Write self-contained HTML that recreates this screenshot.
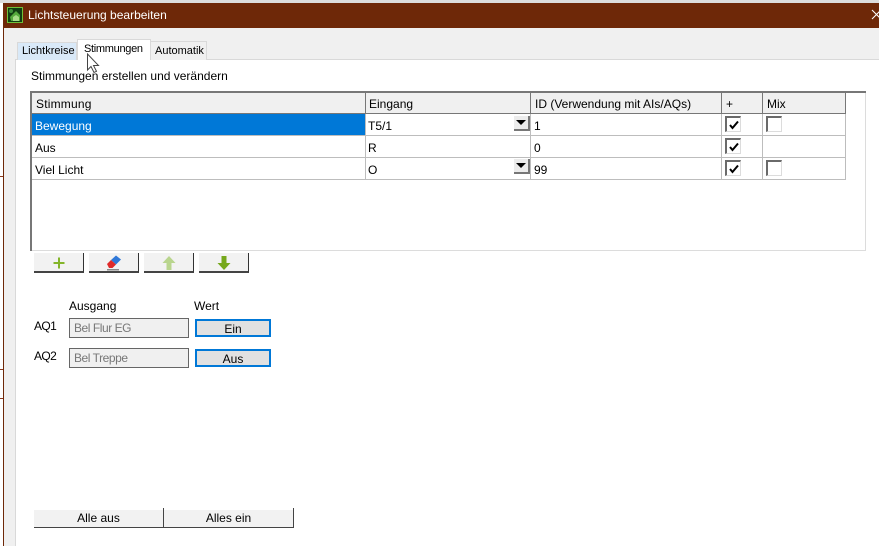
<!DOCTYPE html>
<html><head><meta charset="utf-8"><style>
html,body{margin:0;padding:0}
body{width:879px;height:546px;position:relative;overflow:hidden;background:#fff;font-family:"Liberation Sans",sans-serif;font-size:12px;color:#000}
.a,.t{position:absolute}
.t{white-space:nowrap;line-height:14px}
.h{background:#777}
.g{background:#bdbdbd}
.btn{position:absolute;box-sizing:border-box;background:#f2f2f2;border-right:1px solid #333;border-bottom:2px solid #444;height:20px;top:253px;width:50px}
.cb{position:absolute;box-sizing:border-box;width:16px;height:16px;background:#fff;border:1px solid #dcdcdc;border-top:2px solid #6a6a6a;border-left:2px solid #6a6a6a}
.dd{position:absolute;box-sizing:border-box;width:16px;height:15px;background:#ececec;border-right:2px solid #777;border-bottom:2px solid #777}
.dd:after{content:"";position:absolute;left:2px;top:4px;border-left:5px solid transparent;border-right:5px solid transparent;border-top:5px solid #000}
.ro{position:absolute;box-sizing:border-box;left:69px;width:120px;height:20px;background:#f0f0f0;border:1px solid #666;color:#777;padding-left:4px;line-height:18px;letter-spacing:-.45px}
.val{position:absolute;box-sizing:border-box;left:195px;width:76px;height:18px;background:#e1e1e1;border:2px solid #0078d7;text-align:center;line-height:16px}
</style></head><body>
<div class="a" style="left:0;top:0;width:879px;height:3px;background:#ddd"></div>
<div class="a" style="left:3px;top:3px;width:876px;height:25px;background:#6e2808"></div>
<div class="a" style="left:3px;top:28px;width:1px;height:518px;background:#6e2808"></div>
<div class="a" style="left:0;top:3px;width:3px;height:543px;background:#fff"></div>
<div class="a" style="left:4px;top:28px;width:875px;height:32px;background:#f0f0f0"></div>
<div class="a" style="left:4px;top:28px;width:12px;height:518px;background:#f0f0f0"></div>
<div class="a" style="left:15px;top:59px;width:864px;height:1px;background:#d9d9d9"></div>
<div class="a" style="left:15px;top:59px;width:1px;height:487px;background:#d9d9d9"></div>
<div class="a" style="left:0;top:176px;width:3px;height:1px;background:#8a3a20"></div>
<div class="a" style="left:0;top:369px;width:3px;height:1px;background:#8a3a20"></div>
<div class="a" style="left:0;top:398px;width:3px;height:1px;background:#8a3a20"></div>

<svg class="a" style="left:7px;top:7px" width="16" height="16" viewBox="0 0 16 16"><rect x=".5" y=".5" width="15" height="15" fill="#123d12" stroke="#6fc03a"/><circle cx="4" cy="4" r="2" fill="#3f8f3a"/><path d="M3 10l6-6 4 4v6H4z" fill="#55a83c"/><path d="M6 14v-4l3-2 3 2v4z" fill="#a8dc88"/></svg>
<div class="t" style="left:28px;top:8px;color:#fff">Lichtsteuerung bearbeiten</div>
<svg class="a" style="left:871px;top:9px" width="8" height="12"><path d="M1 1l9 9M10 1L1 10" stroke="#fff" stroke-width="1" fill="none"/></svg>

<div class="a" style="left:17px;top:42px;width:60px;height:18px;box-sizing:border-box;background:#d9e9f8;border:1px solid #d9d9d9;border-bottom:0"></div>
<div class="t" style="left:22px;top:44px;font-size:11px">Lichtkreise</div>
<div class="a" style="left:150px;top:41px;width:57px;height:19px;box-sizing:border-box;background:#f0f0f0;border:1px solid #d9d9d9;border-bottom:0"></div>
<div class="t" style="left:155px;top:44px;font-size:11px">Automatik</div>
<div class="a" style="left:77px;top:39px;width:74px;height:21px;box-sizing:border-box;background:#fff;border:1px solid #d9d9d9;border-bottom:0"></div>
<div class="t" style="left:84px;top:42px;font-size:11px;letter-spacing:-.3px">Stimmungen</div>

<div class="t" style="left:31px;top:69px">Stimmungen erstellen und verändern</div>

<!-- table -->
<div class="a" style="left:30px;top:91px;width:836px;height:2px;background:#777"></div>
<div class="a" style="left:30px;top:91px;width:2px;height:160px;background:#777"></div>
<div class="a" style="left:32px;top:250px;width:834px;height:1px;background:#dcdcdc"></div>
<div class="a" style="left:865px;top:93px;width:1px;height:158px;background:#dcdcdc"></div>
<div class="a" style="left:32px;top:93px;width:813px;height:20px;background:#f0f0f0"></div>
<div class="a" style="left:32px;top:114px;width:333px;height:21px;background:#0078d7"></div>
<div class="a h" style="left:32px;top:113px;width:814px;height:1px"></div>
<div class="a g" style="left:32px;top:135px;width:814px;height:1px"></div>
<div class="a g" style="left:32px;top:157px;width:814px;height:1px"></div>
<div class="a g" style="left:32px;top:179px;width:814px;height:1px"></div>
<div class="a h" style="left:365px;top:93px;width:1px;height:20px"></div>
<div class="a h" style="left:530px;top:93px;width:1px;height:20px"></div>
<div class="a h" style="left:721px;top:93px;width:1px;height:20px"></div>
<div class="a h" style="left:762px;top:93px;width:1px;height:20px"></div>
<div class="a h" style="left:845px;top:93px;width:1px;height:20px"></div>
<div class="a g" style="left:365px;top:114px;width:1px;height:66px"></div>
<div class="a g" style="left:530px;top:114px;width:1px;height:66px"></div>
<div class="a g" style="left:721px;top:114px;width:1px;height:66px"></div>
<div class="a g" style="left:762px;top:114px;width:1px;height:66px"></div>
<div class="a g" style="left:845px;top:114px;width:1px;height:66px"></div>

<div class="t" style="left:36px;top:97px;letter-spacing:.2px">Stimmung</div>
<div class="t" style="left:369px;top:97px">Eingang</div>
<div class="t" style="left:535px;top:97px">ID (Verwendung mit AIs/AQs)</div>
<div class="t" style="left:726px;top:97px">+</div>
<div class="t" style="left:767px;top:97px">Mix</div>

<div class="t" style="left:35px;top:119px;color:#fff">Bewegung</div>
<div class="t" style="left:368px;top:119px">T5/1</div>
<div class="t" style="left:534px;top:119px">1</div>
<div class="t" style="left:35px;top:141px">Aus</div>
<div class="t" style="left:368px;top:141px">R</div>
<div class="t" style="left:534px;top:141px">0</div>
<div class="t" style="left:35px;top:163px">Viel Licht</div>
<div class="t" style="left:368px;top:163px">O</div>
<div class="t" style="left:534px;top:163px">99</div>

<div class="dd" style="left:514px;top:116px"></div>
<div class="dd" style="left:514px;top:159px"></div>

<div class="cb" style="left:725px;top:116px"><svg class="a" style="left:1px;top:1px" width="12" height="12"><path d="M2 6l2.500 3L10 2.500" stroke="#000" stroke-width="2" fill="none"/></svg></div>
<div class="cb" style="left:725px;top:138px"><svg class="a" style="left:1px;top:1px" width="12" height="12"><path d="M2 6l2.500 3L10 2.500" stroke="#000" stroke-width="2" fill="none"/></svg></div>
<div class="cb" style="left:725px;top:160px"><svg class="a" style="left:1px;top:1px" width="12" height="12"><path d="M2 6l2.500 3L10 2.500" stroke="#000" stroke-width="2" fill="none"/></svg></div>
<div class="cb" style="left:766px;top:116px"></div>
<div class="cb" style="left:766px;top:160px"></div>

<!-- toolbar -->
<div class="btn" style="left:34px"><svg class="a" style="left:18px;top:3px" width="14" height="14"><path d="M7 1.500v11M1.500 7h11" stroke="#84b52a" stroke-width="2" fill="none"/></svg></div>
<div class="btn" style="left:89px"><svg class="a" style="left:16px;top:1px" width="18" height="17"><path d="M6 6l5-4.500 5 4-5 5z" fill="#2f78d8"/><path d="M2 10l4-4 5 4.500-3.500 3.500H4z" fill="#e02a2a"/><rect x="2" y="15" width="12" height="1.500" fill="#888"/></svg></div>
<div class="btn" style="left:144px"><svg class="a" style="left:18px;top:2px" width="14" height="16"><path d="M7 1L.500 8h4v7h5V8h4z" fill="#b9d58e"/></svg></div>
<div class="btn" style="left:199px"><svg class="a" style="left:18px;top:2px" width="14" height="16"><path d="M4.500 1h5v7h4L7 15 .500 8h4z" fill="#76a81c"/></svg></div>

<div class="t" style="left:69px;top:299px">Ausgang</div>
<div class="t" style="left:194px;top:299px">Wert</div>
<div class="t" style="left:34px;top:319px;letter-spacing:-.6px">AQ1</div>
<div class="t" style="left:34px;top:349px;letter-spacing:-.6px">AQ2</div>
<div class="ro" style="top:318px">Bel Flur EG</div>
<div class="ro" style="top:348px">Bel Treppe</div>
<div class="val" style="top:319px">Ein</div>
<div class="val" style="top:349px">Aus</div>

<div class="a" style="left:34px;top:510px;width:260px;height:18px;box-sizing:border-box;background:#f2f2f2;border-bottom:1px solid #444"></div>
<div class="a" style="left:163px;top:508px;width:1px;height:20px;background:#444"></div>
<div class="a" style="left:293px;top:508px;width:1px;height:20px;background:#444"></div>
<div class="t" style="left:34px;width:129px;text-align:center;top:511px">Alle aus</div>
<div class="t" style="left:164px;width:129px;text-align:center;top:511px">Alles ein</div>

<!-- cursor -->
<svg class="a" style="left:86px;top:53px" width="14" height="21"><path d="M1.500 1v16l3.500-3.500 3 6 2.500-1.200-3-5.800h5z" fill="#fff" stroke="#444" stroke-width="1"/></svg>
</body></html>
